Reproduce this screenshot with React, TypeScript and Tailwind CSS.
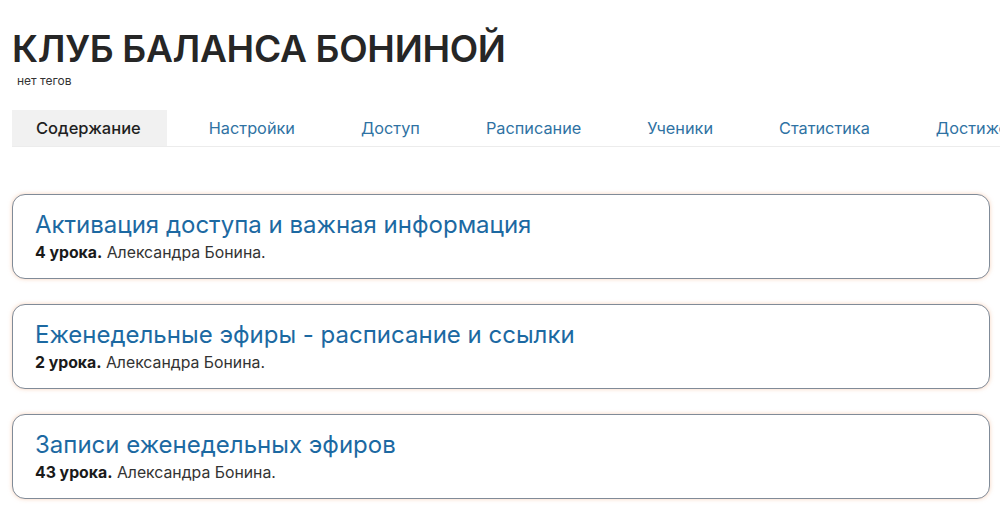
const tabs = ['Содержание', 'Настройки', 'Доступ', 'Расписание', 'Ученики', 'Статистика', 'Достижения'];

const courses = [
  { title: 'Активация доступа и важная информация', lessons: '4 урока.', author: 'Александра Бонина.' },
  { title: 'Еженедельные эфиры - расписание и ссылки', lessons: '2 урока.', author: 'Александра Бонина.' },
  { title: 'Записи еженедельных эфиров', lessons: '43 урока.', author: 'Александра Бонина.' },
];

export default function App() {
  return (
    <div className="h-[506px] w-[1000px] overflow-hidden bg-white font-['Inter',sans-serif] text-[#222]">
      <div className="pl-3 pt-[27px]">
        <h1 className="text-[37px] font-semibold leading-[44px] tracking-[-0.3px] text-[#262626]">
          КЛУБ БАЛАНСА БОНИНОЙ
        </h1>
        <div className="mt-[2px] pl-[5px] text-[12px] leading-4 text-[#333]">нет тегов</div>
      </div>

      <nav className="ml-3 mt-[21px] flex gap-[18px] overflow-hidden whitespace-nowrap border-b border-[#ececec]">
        {tabs.map((t, i) => (
          <div
            key={t}
            className={
              i === 0
                ? 'shrink-0 bg-[#f1f1f1] pl-6 pr-[26px] text-[16.5px] font-medium leading-[36px] text-[#1f1f1f]'
                : 'shrink-0 px-6 text-[16.3px] leading-[36px] text-[#2f72a3]'
            }
          >
            {t}
          </div>
        ))}
      </nav>

      <div className="mt-[47px] flex flex-col gap-[25px] pl-3 pr-[10px]">
        {courses.map((c) => (
          <div
            key={c.title}
            className="rounded-[13px] border border-[#808b98] bg-white px-[22px] pb-[13px] pt-[14px] shadow-[0_0_4px_rgba(240,175,135,0.55)]"
          >
            <div className="text-[24px] leading-[32px] text-[#1c69a2]">{c.title}</div>
            <div className="text-[15.8px] leading-[24px] text-[#333]">
              <span className="font-bold text-[#1a1a1a]">{c.lessons}</span> {c.author}
            </div>
          </div>
        ))}
      </div>
    </div>
  );
}
